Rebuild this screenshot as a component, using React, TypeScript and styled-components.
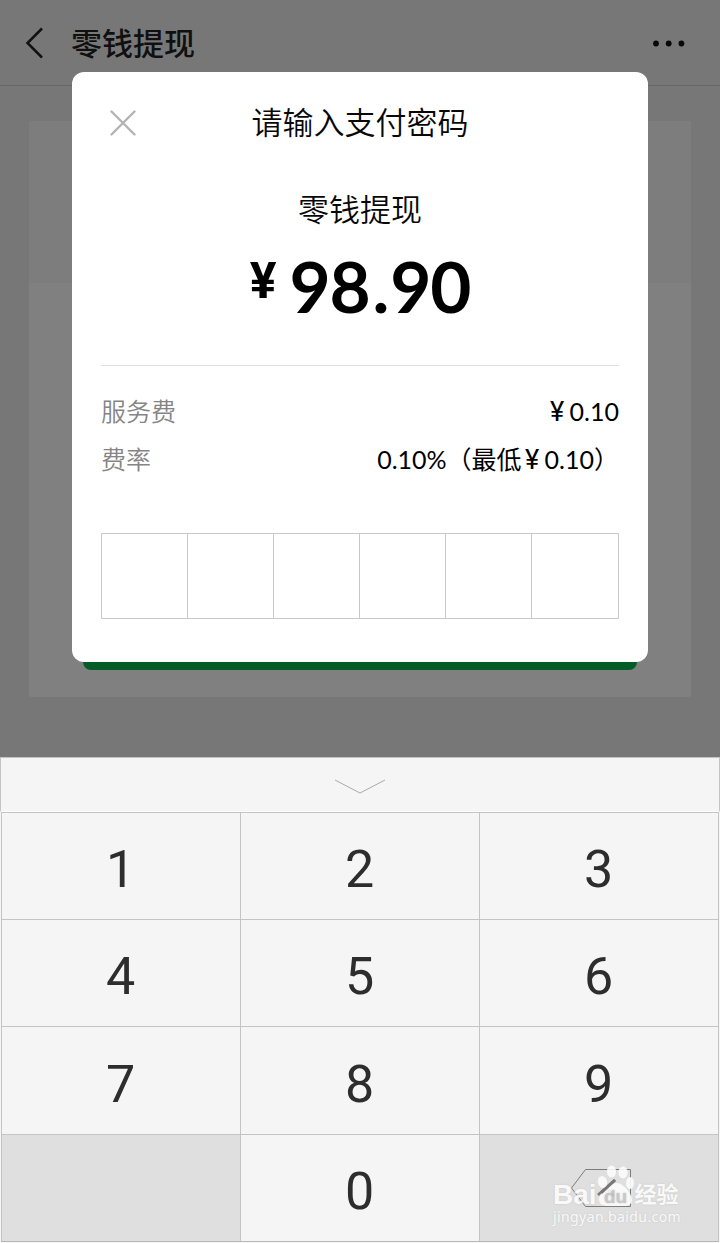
import React from "react";
import styled, { createGlobalStyle } from "styled-components";

const Global = createGlobalStyle`
  * { box-sizing: border-box; }
  body { margin: 0; background: #777; }
  h1, h2, p { margin: 0; font-weight: 400; }
  button { padding: 0; border: 0; background: none; font: inherit; color: inherit; }
`;

const cjk = `"Noto Sans CJK SC", sans-serif`;

const Screen = styled.div`
  position: relative;
  display: flex;
  flex-direction: column;
  width: 720px;
  height: 1243px;
  overflow: hidden;
  background: #777;
  font-family: ${cjk};
`;

const Header = styled.header`
  display: flex;
  align-items: center;
  height: 86px;
  padding: 0 34px 0 25px;
  border-bottom: 1px solid #696969;
`;

const PageTitle = styled.h1`
  flex: 1;
  margin-left: 27px;
  padding-bottom: 2px;
  font-size: 31px;
  line-height: 40px;
  font-weight: 500;
  color: #101010;
`;

const BackgroundArea = styled.main`
  flex: 1;
  padding: 35px 29px 0;
`;

const BackgroundCard = styled.section`
  display: flex;
  flex-direction: column;
  justify-content: flex-end;
  height: 576px;
  padding: 0 54px 27px;
  border-radius: 3px;
  background: linear-gradient(#7d7d7d 162px, #808080 162px);
`;

const ConfirmBar = styled.div`
  height: 60px;
  border-radius: 8px;
  background: #045d26;
`;

const Dialog = styled.section`
  position: absolute;
  top: 72px;
  left: 72px;
  width: 576px;
  height: 590px;
  padding: 0 29px;
  border-radius: 12px;
  background: #fff;
  color: #080808;
`;

const DialogHead = styled.div`
  display: grid;
  grid-template-columns: 44px 1fr 44px;
  align-items: center;
  height: 102px;
`;

const CloseButton = styled.button`
  display: flex;
  justify-content: flex-end;
  padding-right: 9px;
`;

const DialogTitle = styled.h2`
  padding-bottom: 4px;
  text-align: center;
  font-size: 31px;
  line-height: 40px;
  font-weight: 350;
`;

const Purpose = styled.p`
  margin-top: 14px;
  text-align: center;
  font-size: 31px;
  line-height: 40px;
  font-weight: 350;
`;

const Amount = styled.div`
  display: flex;
  justify-content: center;
  align-items: flex-start;
  height: 138px;
  padding-top: 20px;
  border-bottom: 1px solid #dedede;
  font-family: Lato, ${cjk};
  font-weight: 700;
  color: #000;
`;

const Currency = styled.span`
  margin-right: 13px;
  font-family: Roboto, sans-serif;
  font-size: 50px;
  line-height: 66px;
`;

const Figure = styled.span`
  font-size: 71px;
  line-height: 76px;
  letter-spacing: -1.2px;
`;

const Point = styled.span`
  margin: 0 2px 0 3px;
`;

const Fees = styled.dl`
  margin: 20px 0 0;
`;

const FeeRow = styled.div`
  display: flex;
  justify-content: space-between;
  height: 48px;
  font-size: 25px;
  line-height: 48px;
`;

const FeeLabel = styled.dt`
  font-weight: 350;
  color: #858585;
`;

const FeeValue = styled.dd`
  margin: 0;
  padding-top: 1px;
  font-family: Lato, ${cjk};
  color: #000;
`;

const Yen = styled.span`
  display: inline-block;
  width: 23px;
  padding-right: 2px;
  text-align: center;
  font-family: Roboto, sans-serif;
  font-size: 27px;
  line-height: 1;
`;

const PinRow = styled.div`
  display: grid;
  grid-template-columns: repeat(6, 1fr);
  height: 86px;
  margin-top: 51px;
  border: 1px solid #c8c8c8;
`;

const PinBox = styled.div`
  border-right: 1px solid #c8c8c8;
  &:last-child { border-right: 0; }
`;

const Keyboard = styled.footer`
  display: flex;
  flex-direction: column;
  height: 486px;
  background: #f5f5f5;
`;

const CollapseBar = styled.button`
  display: flex;
  justify-content: center;
  align-items: center;
  height: 55px;
  padding-top: 4px;
  border: 1px solid #c4c4c4;
  border-bottom-color: #fff;
`;

const Keys = styled.div`
  display: grid;
  grid-template-columns: 239px 239px 239px;
  grid-template-rows: 107px 107px 108px 107px;
  width: 718px;
  margin-left: 1px;
  border-right: 1px solid #c4c4c4;
  border-bottom: 1px solid #b8b8b8;
`;

const Key = styled.button<{ $muted?: boolean }>`
  display: flex;
  justify-content: center;
  align-items: center;
  border-top: 1px solid #c4c4c4;
  border-left: 1px solid #c4c4c4;
  background: ${(p) => (p.$muted ? "#dfdfdf" : "#f5f5f5")};
  padding: ${(p) => (p.$muted ? "0 0 0 3px" : "8px 1px 0 0")};
  font-family: Roboto, sans-serif;
  font-size: 52px;
  line-height: 60px;
  color: #2d2d2d;
`;

const Watermark = styled.div`
  position: absolute;
  left: 553px;
  top: 1162px;
  color: #fcfcfc;
  opacity: 0.9;
  text-shadow: 0 0 2px #c4c4c4;
`;

const BrandLine = styled.div`
  display: flex;
  align-items: flex-end;
  height: 47px;
`;

const BrandWord = styled.span`
  height: 30px;
  font: 700 28px/32px "Liberation Sans", sans-serif;
`;

const BrandCjk = styled.span`
  height: 33px;
  font: 700 22px/32px ${cjk};
`;

const SiteName = styled.div`
  font: 400 14px/16px "Noto Sans", sans-serif;
  letter-spacing: 0.4px;
`;

const DeleteIcon = () => (
  <svg width="62" height="40" viewBox="0 0 62 40" fill="none" stroke="#7c7c7c">
    <path d="M15.500 1.500h45v37h-45L1.500 20z" />
    <path d="m28 27 17-15M36 20l8 8" strokeWidth="3" />
  </svg>
);

const Paw = () => (
  <svg width="38" height="47" viewBox="1 0 38 47" fill="#fcfcfc">
    <ellipse cx="6.500" cy="20" rx="4.500" ry="6" transform="rotate(-15 6.500 20)" />
    <ellipse cx="15.500" cy="9.500" rx="4.600" ry="6" />
    <ellipse cx="27" cy="10.500" rx="4.600" ry="6" />
    <ellipse cx="34" cy="21" rx="4" ry="6" />
    <path d="M21 21c6 0 15 11 15 17 0 4-4 6-8 6H12c-5 0-9-2-9-7 0-6 12-16 18-16z" />
    <text x="8" y="41" fontFamily="Liberation Sans" fontWeight="700" fontSize="19" fill="#c6c6c6">du</text>
    <path d="m5 31 14-13" stroke="#777" strokeWidth="3" />
  </svg>
);

const digits = ["1", "2", "3", "4", "5", "6", "7", "8", "9"];

export default function App() {
  return (
    <>
      <Global />
      <Screen>
        <Header>
          <svg width="19" height="32" viewBox="0 0 19 32" fill="none" stroke="#111" strokeWidth="2.500">
            <path d="M17 1.500 2.500 16 17 30.500" />
          </svg>
          <PageTitle>零钱提现</PageTitle>
          <svg width="34" height="8" viewBox="0 0 34 8" fill="#080808">
            <circle cx="4" cy="4.500" r="2.900" />
            <circle cx="16.700" cy="4.500" r="2.900" />
            <circle cx="29.400" cy="4.500" r="2.900" />
          </svg>
        </Header>
        <BackgroundArea>
          <BackgroundCard>
            <ConfirmBar />
          </BackgroundCard>
        </BackgroundArea>
        <Keyboard>
          <CollapseBar aria-label="收起键盘">
            <svg width="52" height="15" viewBox="0 0 52 15" fill="none" stroke="#aaa">
              <path d="m1 1 25 13L51 1" />
            </svg>
          </CollapseBar>
          <Keys>
            {digits.map((d) => (
              <Key key={d}>{d}</Key>
            ))}
            <Key $muted />
            <Key>0</Key>
            <Key $muted aria-label="删除">
              <DeleteIcon />
            </Key>
          </Keys>
        </Keyboard>
        <Dialog>
          <DialogHead>
            <CloseButton aria-label="关闭">
              <svg width="26" height="26" viewBox="0 0 26 26" stroke="#b2b2b2" strokeWidth="2.300" strokeLinecap="round">
                <path d="m1.500 1.500 23 23m0-23-23 23" />
              </svg>
            </CloseButton>
            <DialogTitle>请输入支付密码</DialogTitle>
          </DialogHead>
          <Purpose>零钱提现</Purpose>
          <Amount>
            <Currency>¥</Currency>
            <Figure>98<Point>.</Point>90</Figure>
          </Amount>
          <Fees>
            <FeeRow>
              <FeeLabel>服务费</FeeLabel>
              <FeeValue><Yen>¥</Yen>0.10</FeeValue>
            </FeeRow>
            <FeeRow>
              <FeeLabel>费率</FeeLabel>
              <FeeValue>0.10%（最低<Yen>¥</Yen>0.10）</FeeValue>
            </FeeRow>
          </Fees>
          <PinRow>
            {digits.slice(0, 6).map((d) => (
              <PinBox key={d} />
            ))}
          </PinRow>
        </Dialog>
        <Watermark>
          <BrandLine>
            <BrandWord>Bai</BrandWord>
            <Paw />
            <BrandCjk>经验</BrandCjk>
          </BrandLine>
          <SiteName>jingyan.baidu.com</SiteName>
        </Watermark>
      </Screen>
    </>
  );
}
